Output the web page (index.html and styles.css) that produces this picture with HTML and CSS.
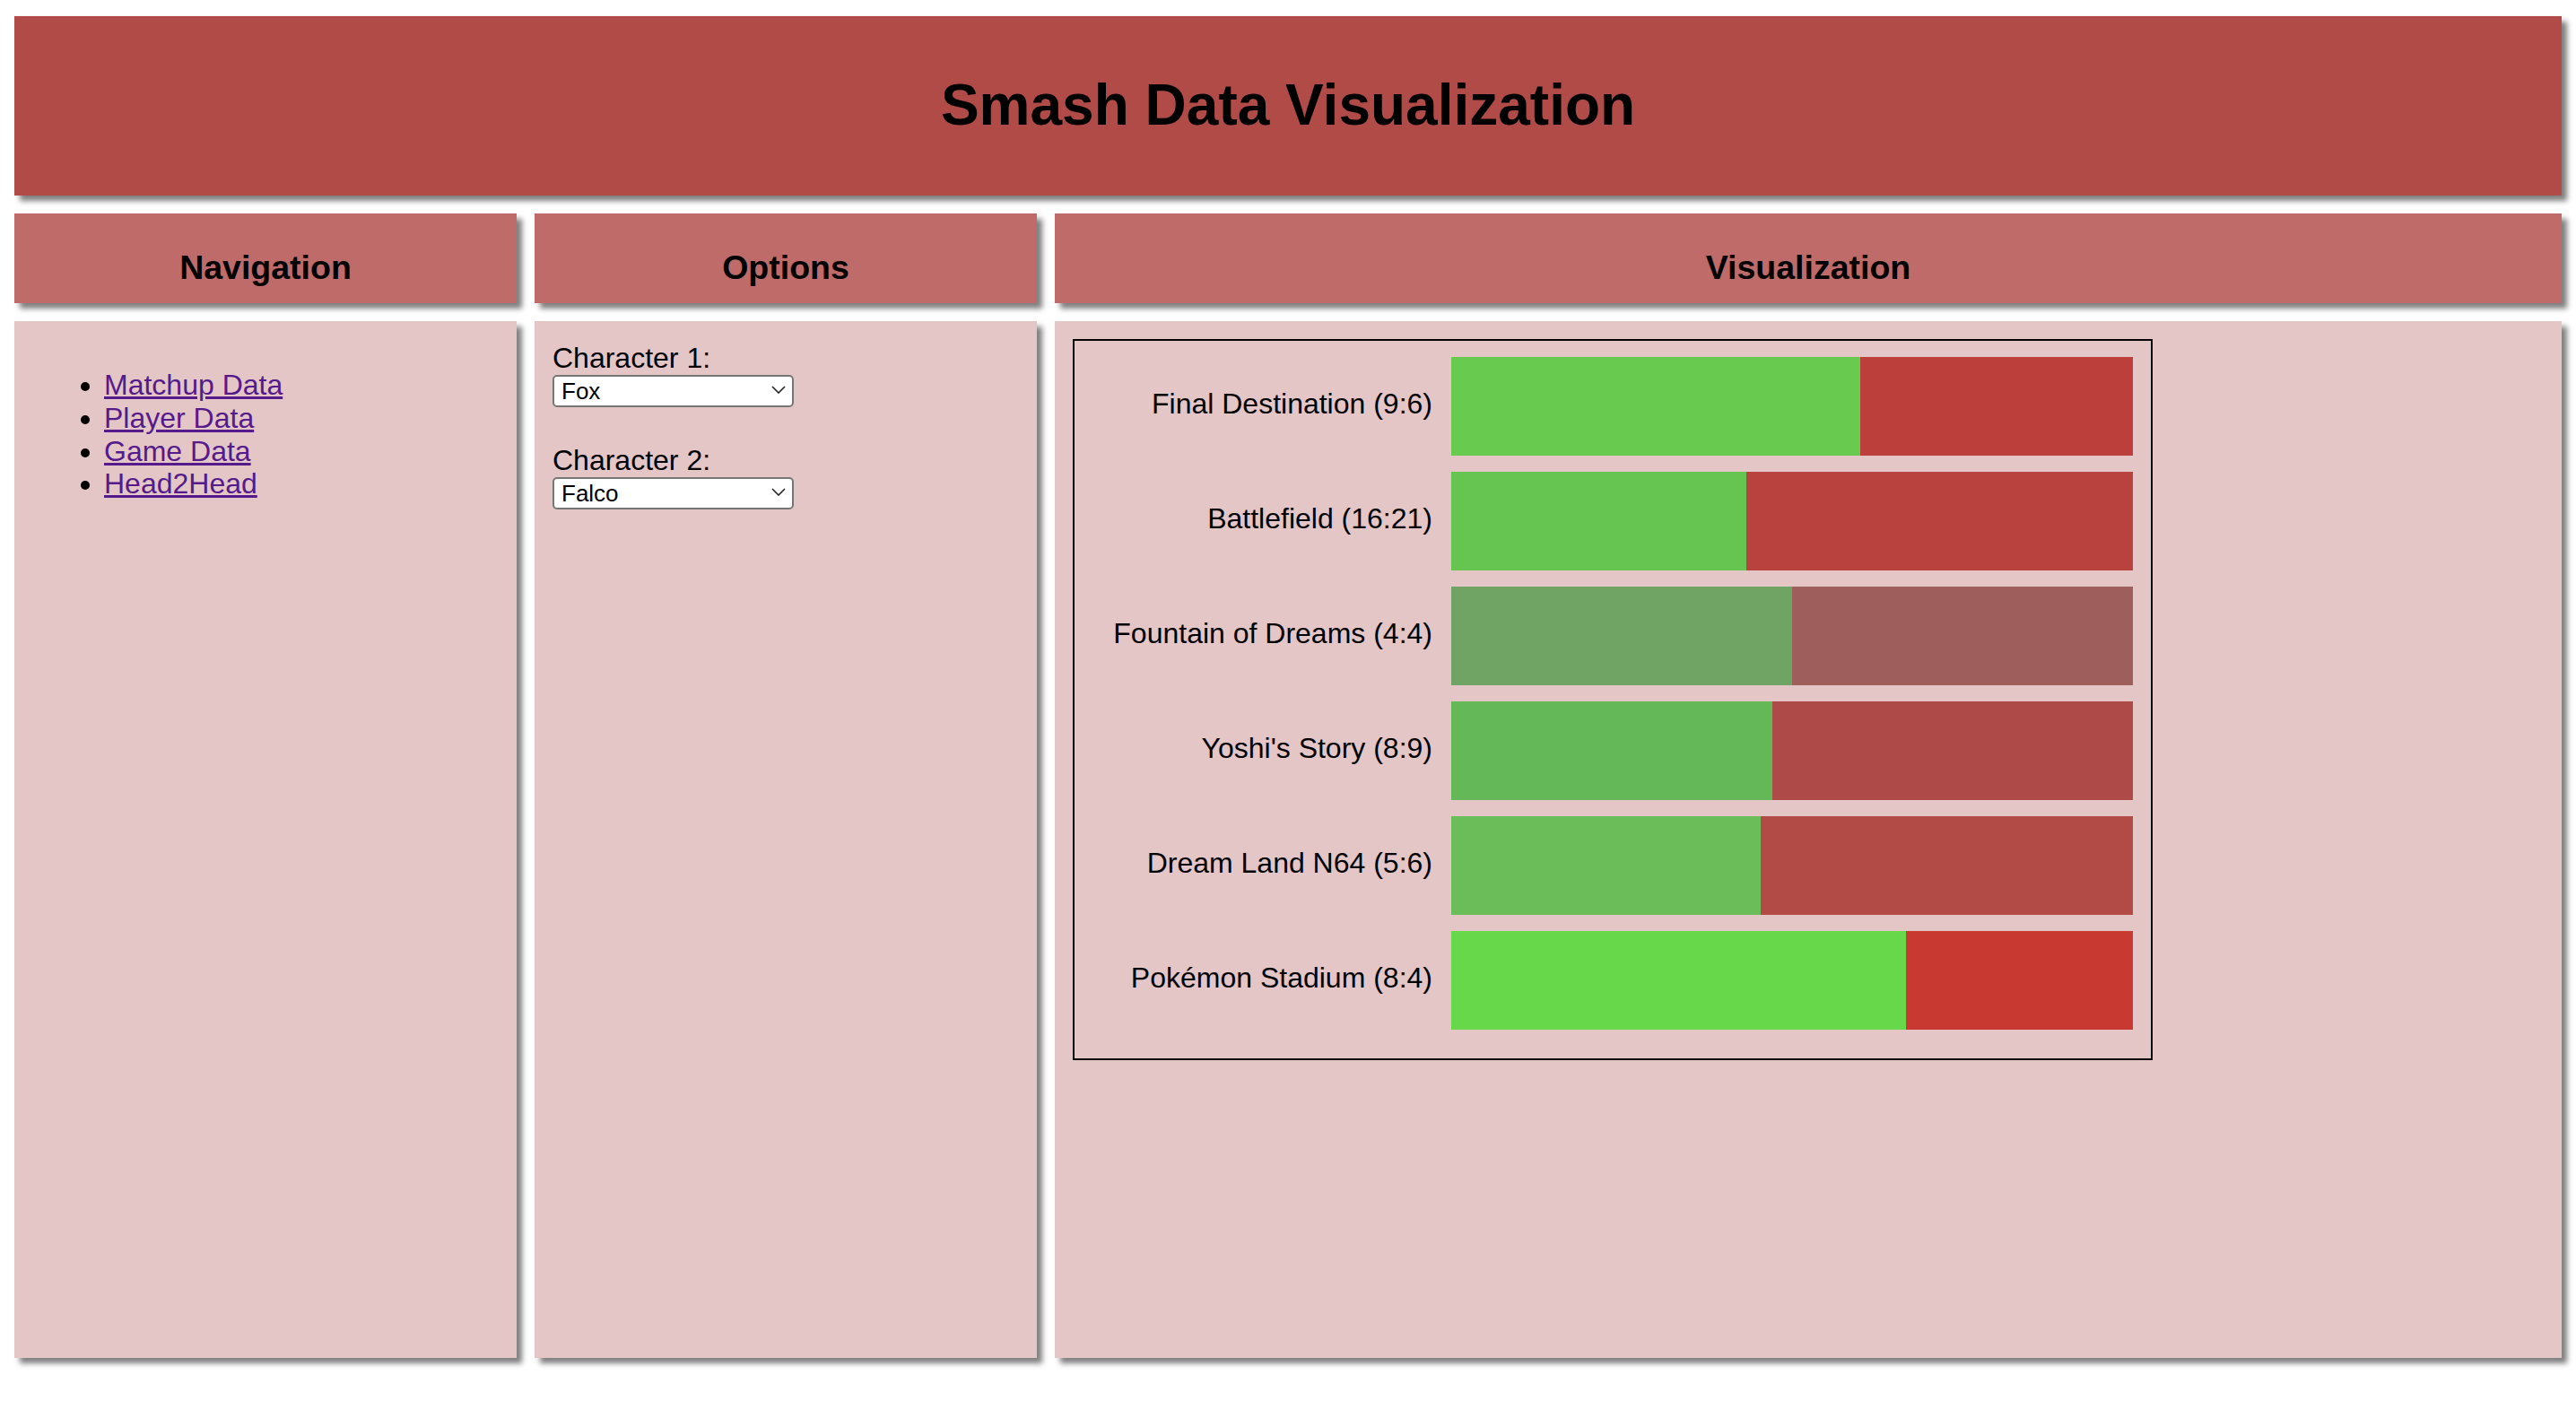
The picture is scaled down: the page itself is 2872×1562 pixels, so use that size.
FILE: index.html
```html
<!DOCTYPE html>
<html lang="en">
<head>
<meta charset="utf-8">
<title>Smash Data Visualization</title>
<link rel="stylesheet" href="styles.css">
</head>
<body>
  <header class="banner">
    <h1 class="banner-title">Smash Data Visualization</h1>
  </header>
  <main class="layout">
    <div class="card card-head"><h3 class="card-title">Navigation</h3></div>
    <div class="card card-head"><h3 class="card-title">Options</h3></div>
    <div class="card card-head"><h3 class="card-title">Visualization</h3></div>

    <nav class="card card-body nav-body">
      <ul class="nav-list">
        <li><a href="#">Matchup Data</a></li>
        <li><a href="#">Player Data</a></li>
        <li><a href="#">Game Data</a></li>
        <li><a href="#">Head2Head</a></li>
      </ul>
    </nav>

    <div class="card card-body options-body">
      <div class="field">
        <label class="field-label" for="c1">Character 1:</label>
        <div class="select-wrap">
          <select id="c1" class="select"><option>Fox</option></select>
          <svg class="chevron" width="16" height="9" viewBox="0 0 16 9"><polyline points="1,1 8,8 15,1" fill="none" stroke="#222" stroke-width="1.6"/></svg>
        </div>
      </div>
      <div class="field">
        <label class="field-label" for="c2">Character 2:</label>
        <div class="select-wrap">
          <select id="c2" class="select"><option>Falco</option></select>
          <svg class="chevron" width="16" height="9" viewBox="0 0 16 9"><polyline points="1,1 8,8 15,1" fill="none" stroke="#222" stroke-width="1.6"/></svg>
        </div>
      </div>
    </div>

    <div class="card card-body viz-body">
      <div class="chart">
        <div class="row">
          <span class="row-label">Final Destination (9:6)</span>
          <div class="bar"><div class="win" style="width:60%;background:#68ca4e"></div><div class="loss" style="background:#bd3f3b"></div></div>
        </div>
        <div class="row">
          <span class="row-label">Battlefield (16:21)</span>
          <div class="bar"><div class="win" style="width:43.24%;background:#66c451"></div><div class="loss" style="background:#b9423f"></div></div>
        </div>
        <div class="row">
          <span class="row-label">Fountain of Dreams (4:4)</span>
          <div class="bar"><div class="win" style="width:50%;background:#6fa465"></div><div class="loss" style="background:#9e5f5c"></div></div>
        </div>
        <div class="row">
          <span class="row-label">Yoshi's Story (8:9)</span>
          <div class="bar"><div class="win" style="width:47.06%;background:#65b857"></div><div class="loss" style="background:#ae4a47"></div></div>
        </div>
        <div class="row">
          <span class="row-label">Dream Land N64 (5:6)</span>
          <div class="bar"><div class="win" style="width:45.45%;background:#6bbd59"></div><div class="loss" style="background:#b24b46"></div></div>
        </div>
        <div class="row">
          <span class="row-label">Pokémon Stadium (8:4)</span>
          <div class="bar"><div class="win" style="width:66.67%;background:#68d84b"></div><div class="loss" style="background:#c83a31"></div></div>
        </div>
      </div>
    </div>
  </main>
</body>
</html>
```
FILE: styles.css
```css
html, body {
  margin: 0;
  background: #ffffff;
}

body {
  padding: 18px 16px 48px 16px;
  font-family: "Liberation Sans", Arial, Helvetica, sans-serif;
  font-size: 32px;
  color: #000;
}

.banner {
  height: 200px;
  background: #b04b47;
  box-shadow: 6px 6px 6px #7f7f7f;
  display: flex;
  align-items: center;
  justify-content: center;
}

.banner-title {
  margin: 0;
  font-size: 64px;
  font-weight: bold;
  line-height: 1.15;
}

.layout {
  margin-top: 20px;
  display: grid;
  grid-template-columns: 1fr 1fr 3fr;
  grid-template-rows: 100px 1156px;
  gap: 20px;
}

.card {
  box-shadow: 6px 6px 6px #7f7f7f;
  box-sizing: border-box;
}

.card-head {
  background: #bf6b69;
  padding-top: 39px;
  text-align: center;
}

.card-title {
  margin: 0;
  font-size: 37.5px;
  font-weight: bold;
  line-height: 1.15;
}

.card-body {
  background: #e5c6c6;
  padding: 20px;
}

.nav-list {
  margin: 33px 0 0 0;
  padding-left: 80px;
  line-height: 1.15;
}

.nav-list a {
  color: #551a8b;
}

.options-body {
  padding-top: 25px;
  display: flex;
  flex-direction: column;
  gap: 45px;
}

.field {
  display: flex;
  flex-direction: column;
  align-items: flex-start;
}

.field-label {
  line-height: 32px;
}

.select-wrap {
  position: relative;
  margin-top: 1px;
  width: 269px;
  height: 36px;
}

.select {
  appearance: none;
  -webkit-appearance: none;
  width: 269px;
  height: 36px;
  box-sizing: border-box;
  border: 2px solid #767676;
  border-radius: 5px;
  background: #ffffff;
  font-family: "Liberation Sans", Arial, sans-serif;
  font-size: 26px;
  color: #000;
  padding: 0 30px 0 8px;
  margin: 0;
}

.chevron {
  position: absolute;
  right: 9px;
  top: 14px;
  pointer-events: none;
}

.chart {
  width: 1204px;
  height: 804px;
  box-sizing: border-box;
  border: 2px solid #000;
  padding: 18px 20px 32px 0;
  display: flex;
  flex-direction: column;
  gap: 18px;
}

.row {
  display: grid;
  grid-template-columns: 1fr 760px;
  column-gap: 21px;
  align-items: center;
  height: 110px;
}

.row-label {
  text-align: right;
  line-height: 1.15;
  white-space: nowrap;
  margin-bottom: 6px;
}

.bar {
  display: flex;
  height: 110px;
}

.win {
  height: 100%;
}

.loss {
  flex: 1;
  height: 100%;
}
```
